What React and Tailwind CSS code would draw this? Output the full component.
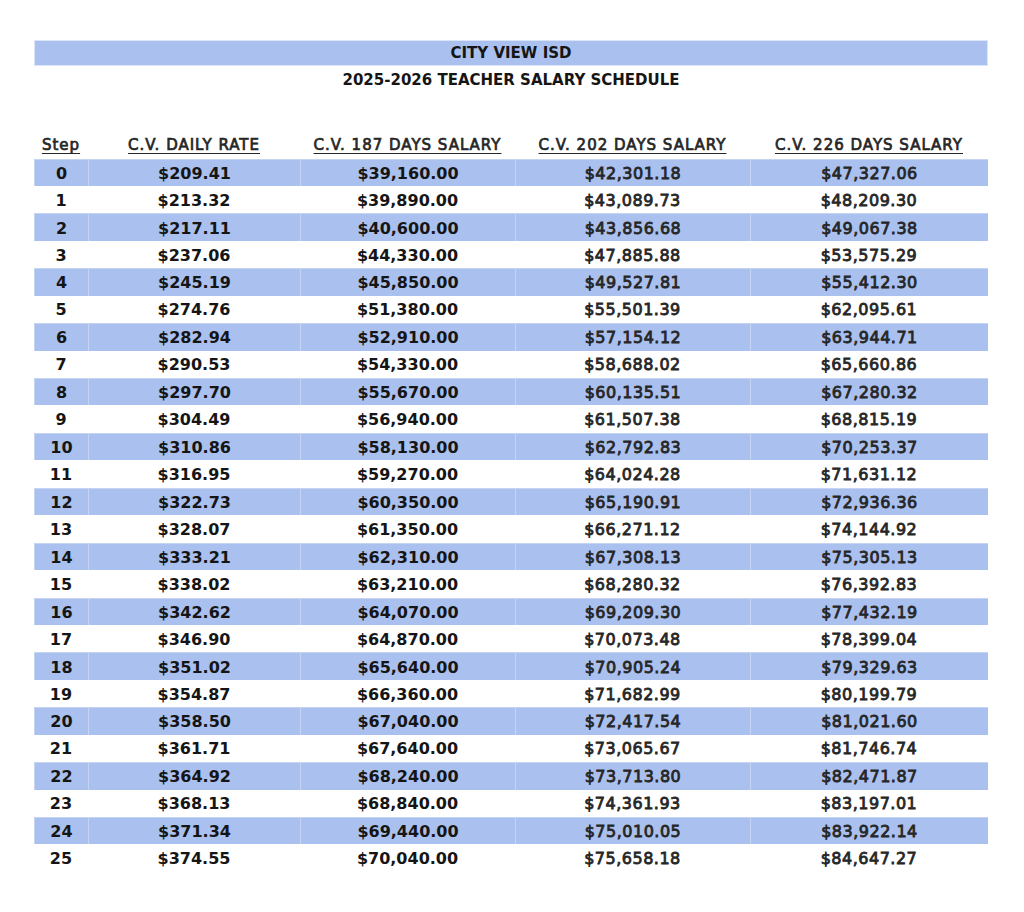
// Salary schedule table – City View ISD 2025-2026
const rows = [
  [0, "$209.41", "$39,160.00", "$42,301.18", "$47,327.06"],
  [1, "$213.32", "$39,890.00", "$43,089.73", "$48,209.30"],
  [2, "$217.11", "$40,600.00", "$43,856.68", "$49,067.38"],
  [3, "$237.06", "$44,330.00", "$47,885.88", "$53,575.29"],
  [4, "$245.19", "$45,850.00", "$49,527.81", "$55,412.30"],
  [5, "$274.76", "$51,380.00", "$55,501.39", "$62,095.61"],
  [6, "$282.94", "$52,910.00", "$57,154.12", "$63,944.71"],
  [7, "$290.53", "$54,330.00", "$58,688.02", "$65,660.86"],
  [8, "$297.70", "$55,670.00", "$60,135.51", "$67,280.32"],
  [9, "$304.49", "$56,940.00", "$61,507.38", "$68,815.19"],
  [10, "$310.86", "$58,130.00", "$62,792.83", "$70,253.37"],
  [11, "$316.95", "$59,270.00", "$64,024.28", "$71,631.12"],
  [12, "$322.73", "$60,350.00", "$65,190.91", "$72,936.36"],
  [13, "$328.07", "$61,350.00", "$66,271.12", "$74,144.92"],
  [14, "$333.21", "$62,310.00", "$67,308.13", "$75,305.13"],
  [15, "$338.02", "$63,210.00", "$68,280.32", "$76,392.83"],
  [16, "$342.62", "$64,070.00", "$69,209.30", "$77,432.19"],
  [17, "$346.90", "$64,870.00", "$70,073.48", "$78,399.04"],
  [18, "$351.02", "$65,640.00", "$70,905.24", "$79,329.63"],
  [19, "$354.87", "$66,360.00", "$71,682.99", "$80,199.79"],
  [20, "$358.50", "$67,040.00", "$72,417.54", "$81,021.60"],
  [21, "$361.71", "$67,640.00", "$73,065.67", "$81,746.74"],
  [22, "$364.92", "$68,240.00", "$73,713.80", "$82,471.87"],
  [23, "$368.13", "$68,840.00", "$74,361.93", "$83,197.01"],
  [24, "$371.34", "$69,440.00", "$75,010.05", "$83,922.14"],
  [25, "$374.55", "$70,040.00", "$75,658.18", "$84,647.27"],
];

const headers = [
  "Step",
  "C.V. DAILY RATE",
  "C.V. 187 DAYS SALARY",
  "C.V. 202 DAYS SALARY",
  "C.V. 226 DAYS SALARY",
];

const cols = "grid grid-cols-[54px_212px_215px_235px_238px]";

// the last two salary columns are printed a little lighter than the rest
const cellWeight = [
  "font-bold",
  "font-bold",
  "font-bold",
  "font-normal tracking-[0.5px] [-webkit-text-stroke:0.8px_#262626] text-[#262626]",
  "font-normal tracking-[0.5px] [-webkit-text-stroke:0.8px_#262626] text-[#262626]",
];

export default function App() {
  return (
    <div className="min-h-[912px] bg-white pt-[40px] pl-[34px] font-['DejaVu_Sans',sans-serif] font-bold text-[#151515]">
      <div className="w-[954px]">
        {/* Title bar */}
        <div className="h-[26px] bg-[#aac0ee] border border-[#dce5f8] flex items-center justify-center text-[15px]">
          CITY VIEW ISD
        </div>
        <div className="h-[28px] flex items-center justify-center text-[15px]">
          2025-2026 TEACHER SALARY SCHEDULE
        </div>

        {/* Column headings */}
        <div className={`${cols} mt-[38px] h-[26px] items-center text-[15px] font-normal text-[#262626]`}>
          {headers.map((h) => (
            <div key={h} className="text-center">
              <span className="underline underline-offset-[3px] decoration-[1px] tracking-[1px] [-webkit-text-stroke:0.7px_#262626]">
                {h}
              </span>
            </div>
          ))}
        </div>

        {/* Salary rows */}
        <div className="mt-[0.5px]">
          {rows.map((r, i) => (
            <div
              key={r[0]}
              className={`${cols} h-[27.44px] text-[16px] ${i % 2 === 0 ? "bg-[#aac0ee]" : "bg-white"}`}
            >
              {r.map((v, j) => (
                <div
                  key={j}
                  className={`flex items-center justify-center pt-[2px] ${cellWeight[j]} ${
                    i % 2 === 0 ? "border-t border-l border-[#c6d4f4]" : ""
                  }`}
                >
                  {v}
                </div>
              ))}
            </div>
          ))}
        </div>
      </div>
    </div>
  );
}
